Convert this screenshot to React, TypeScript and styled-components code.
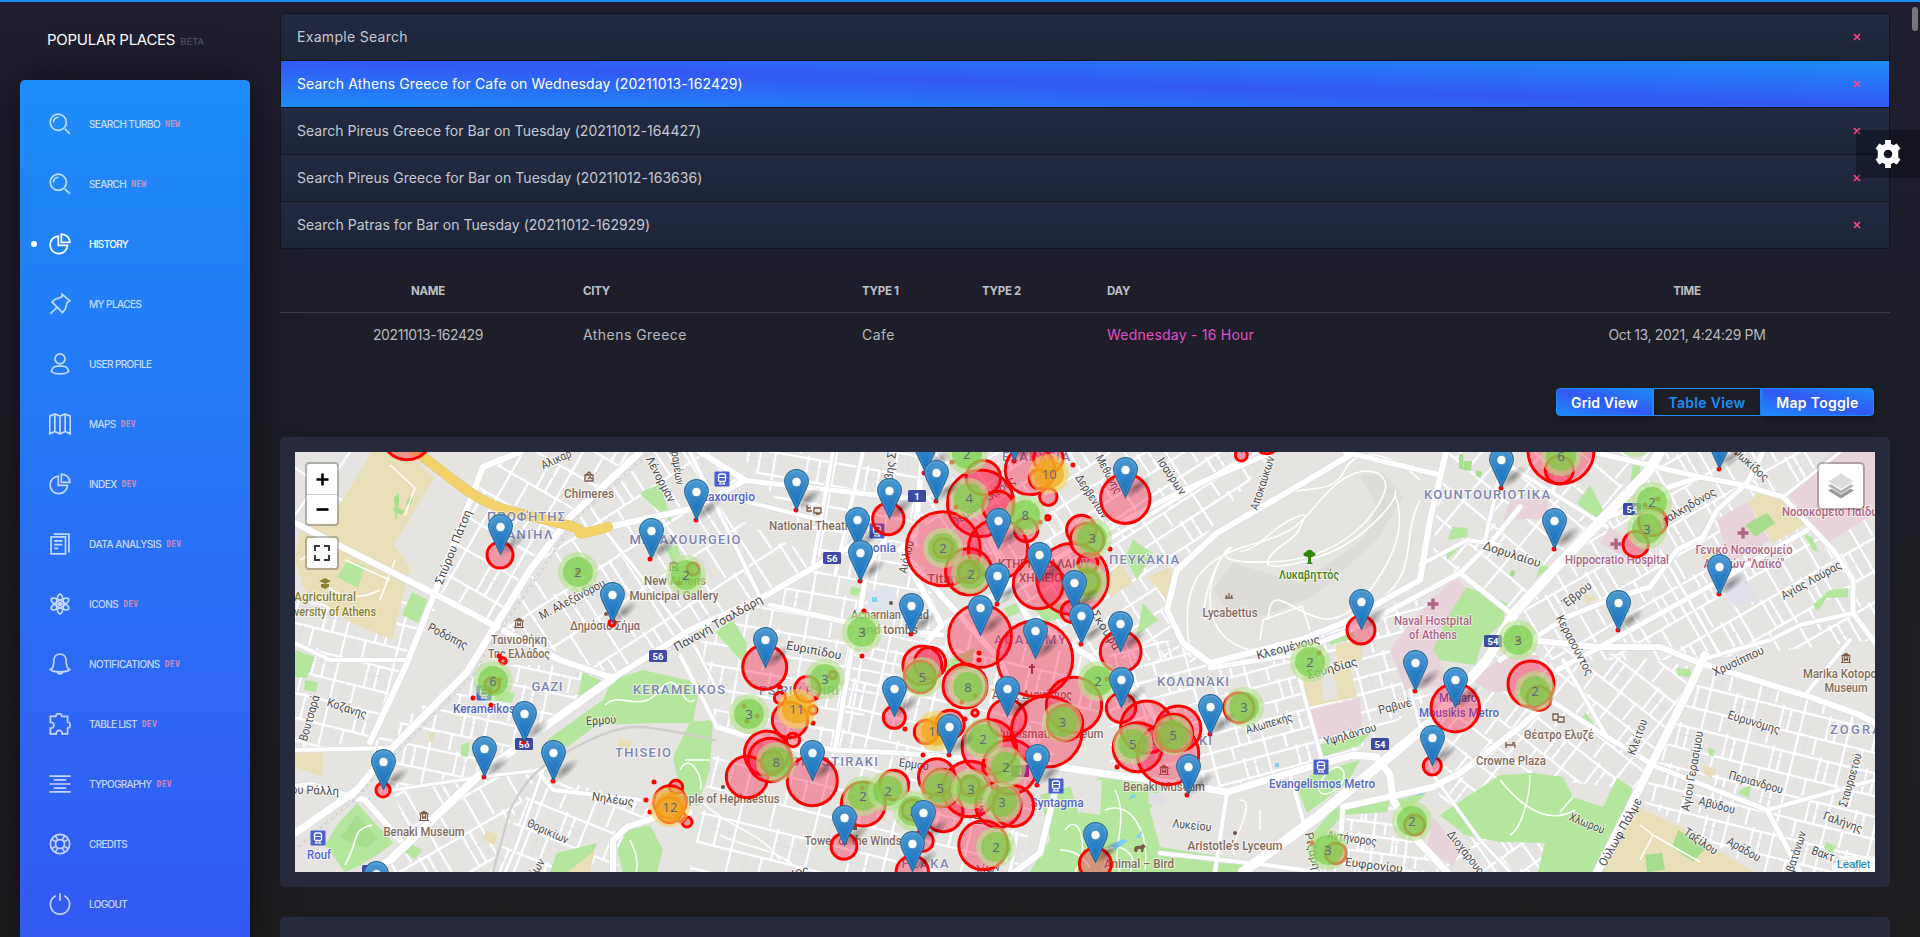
import React from 'react';
import styled, { createGlobalStyle, css } from 'styled-components';

const GlobalStyle = createGlobalStyle`
  html, body { margin: 0; height: 100%; overflow: hidden; }
  body {
    background: #1e1e26;
    font-family: Inter, 'Open Sans', sans-serif;
    color: #c3c4c8;
  }
  * { box-sizing: border-box; }
`;

const Page = styled.div`
  position: relative;
  display: flex;
  width: 100%;
  height: 937px;
  overflow: hidden;
  border-top: 2px solid #1d8cf8;
  background: linear-gradient(#1e1e2f, #1e1e26 50%, #1f1f22);
`;

const Sidebar = styled.aside`
  flex: 0 0 250px;
  padding-left: 20px;
  display: flex;
  flex-direction: column;
`;

const Brand = styled.div`
  flex: none;
  height: 78px;
  padding: 27px 0 0 27px;
  font-size: 15px;
  line-height: 22px;
  letter-spacing: -0.27px;
  color: #fff;
  white-space: nowrap;
`;

const BrandTag = styled.span`
  margin-left: 5px;
  font-size: 9.5px;
  letter-spacing: 0;
  color: #55565f;
`;

const NavPanel = styled.nav`
  width: 230px;
  height: 875px;
  flex: none;
  padding-top: 14px;
  border-radius: 5px;
  background: linear-gradient(#1d8cf8, #3358f4);
  box-shadow: 0 0 45px rgba(0, 0, 0, 0.6);
`;

const NavItem = styled.a<{ $active?: boolean }>`
  display: flex;
  align-items: center;
  height: 60px;
  padding-left: 11px;
  color: #fff;
  font-size: 10px;
  opacity: ${p => (p.$active ? 1 : 0.72)};
  &::before {
    content: '';
    width: 6px;
    height: 6px;
    margin-right: 12px;
    border-radius: 50%;
    background: ${p => (p.$active ? '#fff' : 'transparent')};
  }
`;

const NavIcon = styled.svg`
  width: 22px;
  height: 22px;
  margin-right: 18px;
  fill: none;
  stroke: currentColor;
  stroke-width: 5;
`;

const NavText = styled.span<{ $ls: number }>`
  letter-spacing: ${p => p.$ls}px;
  font-weight: 500;
  white-space: nowrap;
`;

const NavTag = styled.span`
  margin: 1px 0 0 5px;
  font-size: 8px;
  font-weight: 700;
  font-family: 'DejaVu Sans Mono', monospace;
  letter-spacing: 0.2px;
  color: #ff98a6;
`;

const Main = styled.main`
  flex: 1;
  padding: 11px 30px 0;
`;

const History = styled.div`
  border: 1px solid #12151f;
  border-radius: 4px 4px 0 0;
  overflow: hidden;
`;

const HistoryRow = styled.div<{ $active?: boolean }>`
  display: flex;
  align-items: center;
  justify-content: space-between;
  height: 47px;
  padding: 0 28px 1px 16px;
  border-bottom: 1px solid #12151f;
  font-size: 14px;
  color: #c6c9cf;
  background: linear-gradient(#222a42, #1d253a);
  &:last-child { height: 46px; border-bottom: 0; }
  ${p =>
    p.$active &&
    css`
      color: #fff;
      background: linear-gradient(to bottom left, #1d8cf8, #3358f4, #1d8cf8);
    `}
`;

const HistoryText = styled.span<{ $ls: number }>`
  letter-spacing: ${p => p.$ls}px;
`;

const Remove = styled.svg`
  width: 8px;
  height: 8px;
  stroke: #fd4a82;
  stroke-width: 1.5;
`;

const Info = styled.div`
  display: grid;
  grid-template-columns: 296px 279px 120px 125px 384px 406px;
  margin-top: 20px;
`;

const Head = styled.div<{ $center?: boolean }>`
  height: 44px;
  padding: 0 7px;
  line-height: 45px;
  font-size: 11.5px;
  font-weight: 700;
  letter-spacing: -0.25px;
  color: #bfc0c3;
  border-bottom: 1px solid #393a44;
  text-align: ${p => (p.$center ? 'center' : 'left')};
`;

const Cell = styled.div<{ $center?: boolean; $hot?: boolean }>`
  height: 44px;
  padding: 0 7px;
  line-height: 44px;
  font-size: 14px;
  letter-spacing: ${p => (p.$center ? '-0.38px' : p.$hot ? '0.23px' : '0.45px')};
  color: ${p => (p.$hot ? '#e14eca' : '#b8b9bc')};
  text-align: ${p => (p.$center ? 'center' : 'left')};
`;

const Toolbar = styled.div`
  display: flex;
  justify-content: flex-end;
  margin: 31px 16px 21px 0;
`;

const ToolButton = styled.button<{ $w: number; $plain?: boolean }>`
  width: ${p => p.$w}px;
  height: 28px;
  padding: 0;
  border: 1px solid #1d8cf8;
  color: #fff;
  font: 600 14px Inter, sans-serif;
  letter-spacing: ${p => (p.$w > 100 ? 0.3 : 0.12)}px;
  background: linear-gradient(to bottom left, #1d8cf8, #3358f4, #1d8cf8);
  box-shadow: 2px 2px 6px rgba(0, 0, 0, 0.4);
  &:first-child { border-radius: 4px 0 0 4px; }
  &:last-child { border-radius: 0 4px 4px 0; }
  ${p =>
    p.$plain &&
    css`
      color: #1d8cf8;
      background: transparent;
      box-shadow: none;
    `}
`;

const Card = styled.section`
  padding: 15px;
  border-radius: 5px;
  background: #27293d;
  box-shadow: 0 1px 20px rgba(0, 0, 0, 0.1);
  margin-bottom: 30px;
  min-height: 60px;
`;

const MapBox = styled.div`
  position: relative;
  height: 420px;
  overflow: hidden;
  background: #e5e4e0;
`;

const Layer = styled.svg`
  position: absolute;
  inset: 0;
  width: 1580px;
  height: 420px;
`;

const Bar = styled.div<{ $top: number }>`
  position: absolute;
  left: 10px;
  top: ${p => p.$top}px;
  width: 34px;
  border: 2px solid rgba(0, 0, 0, 0.24);
  border-radius: 4px;
  background: #fff;
  background-clip: padding-box;
`;

const BarButton = styled.div`
  display: flex;
  align-items: center;
  justify-content: center;
  height: 30px;
  & + & { border-top: 1px solid #ccc; }
  svg { display: block; }
`;

const LayersButton = styled.div`
  position: absolute;
  right: 10px;
  top: 10px;
  width: 48px;
  height: 48px;
  display: flex;
  align-items: center;
  justify-content: center;
  border: 2px solid rgba(0, 0, 0, 0.24);
  border-radius: 5px;
  background: #fff;
  background-clip: padding-box;
`;

const Attribution = styled.div`
  position: absolute;
  right: 0;
  bottom: 0;
  padding: 0 5px;
  font: 11px/16px 'Liberation Sans', sans-serif;
  color: #0078a8;
  background: rgba(255, 255, 255, 0.7);
`;

const PinIcon = styled.svg`
  position: absolute;
  width: 52px;
  height: 44px;
  overflow: visible;
`;

const ClusterMark = styled.div<{ $warm: boolean }>`
  position: absolute;
  width: 40px;
  height: 40px;
  padding: 5px;
  border-radius: 50%;
  background: ${p => (p.$warm ? 'rgba(241,211,87,.6)' : 'rgba(181,226,140,.6)')};
  span {
    display: block;
    height: 30px;
    border-radius: 50%;
    text-align: center;
    font: 13px/30px 'Noto Sans', sans-serif;
    color: #5f6b7c;
    background: ${p => (p.$warm ? 'rgba(240,168,12,.65)' : 'rgba(110,204,57,.6)')};
  }
`;

const SettingsTab = styled.div`
  position: absolute;
  right: 0;
  top: 128px;
  width: 64px;
  height: 48px;
  display: flex;
  align-items: center;
  justify-content: center;
  border-radius: 4px 0 0 4px;
  background: rgba(0, 0, 0, 0.3);
`;

const Thumb = styled.div`
  position: absolute;
  right: 2px;
  top: 5px;
  width: 6px;
  height: 24px;
  border-radius: 3px;
  background: #77777b;
`;

/* ---------- navigation ---------- */

const icons: Record<string, React.ReactNode> = {
  search: (
    <>
      <circle cx="27" cy="27" r="23.5" />
      <path d="M13 27a14 14 0 0 1 14-14M46 46l15 15" />
    </>
  ),
  pie: (
    <>
      <path d="M27 9a25.5 25.5 0 1 0 27 27H27Z" />
      <path d="M36 3v24h25A25 25 0 0 0 36 3Z" />
    </>
  ),
  pin: <path d="M38 3l23 20-8 4-6 21-8 9L9 26l9-8 19-6ZM24 41L4 61" />,
  user: (
    <>
      <circle cx="32" cy="17" r="14.5" />
      <path d="M7 55c0-12 10-17 17-17h16c7 0 17 5 17 17 0 0-9 6-25 6S7 55 7 55Z" />
    </>
  ),
  map: <path d="M2 9l15-6 15 6 15-6 15 6v52l-15-7-15 7-15-7-15 7ZM17 3v50M32 9v50M47 3v50" />,
  paper: <path d="M6 11h42v50H6ZM14 3h44v54M15 23h24M15 34h24M15 45h12" />,
  atom: (
    <>
      <ellipse cx="32" cy="32" rx="10" ry="29" />
      <ellipse cx="32" cy="32" rx="10" ry="29" transform="rotate(60 32 32)" />
      <ellipse cx="32" cy="32" rx="10" ry="29" transform="rotate(120 32 32)" />
      <circle cx="32" cy="32" r="4" fill="currentColor" />
    </>
  ),
  bell: (
    <path d="M32 3C20 3 14 12 14 22c0 18-3 22-10 26 6 5 16 7 28 7s22-2 28-7c-7-4-10-8-10-26C50 12 44 3 32 3ZM25 55c1 8 13 8 14 0" />
  ),
  puzzle: (
    <path d="M4 10h16c0-12 18-10 17 0h17v17c10-1 10 17 0 17v17H38c1-14-18-14-17 0H4V44c14 1 14-18 0-17Z" />
  ),
  lines: <path d="M1 9h62M14 20h36M1 32h62M14 44h36M1 55h62" />,
  ring: (
    <>
      <circle cx="32" cy="32" r="28" />
      <circle cx="32" cy="32" r="13" />
      <path d="M9 19l12 7M19 9l7 12M55 19l-12 7M45 9l-7 12M9 45l12-7M19 55l7-12M55 45l-12-7M45 55l-7-12" />
    </>
  ),
  power: <path d="M32 1v22M20 8a28 28 0 1 0 24 0" />,
};

const nav: [string, string, string, number][] = [
  ['search', 'SEARCH TURBO', 'NEW', -0.6],
  ['search', 'SEARCH', 'NEW', -0.62],
  ['pie', 'HISTORY', '', -0.65],
  ['pin', 'MY PLACES', '', -0.55],
  ['user', 'USER PROFILE', '', -0.62],
  ['map', 'MAPS', 'DEV', -0.6],
  ['pie', 'INDEX', 'DEV', -0.6],
  ['paper', 'DATA ANALYSIS', 'DEV', -0.45],
  ['atom', 'ICONS', 'DEV', -0.5],
  ['bell', 'NOTIFICATIONS', 'DEV', -0.48],
  ['puzzle', 'TABLE LIST', 'DEV', -0.72],
  ['lines', 'TYPOGRAPHY', 'DEV', -0.7],
  ['ring', 'CREDITS', '', -0.66],
  ['power', 'LOGOUT', '', -0.65],
];

const searches: [string, number][] = [
  ['Example Search', 0.3],
  ['Search Athens Greece for Cafe on Wednesday (20211013-162429)', 0.13],
  ['Search Pireus Greece for Bar on Tuesday (20211012-164427)', 0.03],
  ['Search Pireus Greece for Bar on Tuesday (20211012-163636)', 0.05],
  ['Search Patras for Bar on Tuesday (20211012-162929)', 0.04],
];

/* ---------- map data, in a 1580x420 frame whose origin is 295,452 ---------- */

type District = [string, number, number, number];
const districts: District[] = [
  ['295,452 372,452 320,537 295,523', 35, 60, 70],
  ['483,467 520,452 638,452 570,517 494,625 436,593', 30, 26, 30],
  ['640,452 740,452 740,520 823,562 690,630 613,675 497,627 570,517', -33, 27, 40],
  ['740,452 923,452 915,535 940,623 835,750 717,730 700,640 823,562', 10, 30, 22],
  ['295,600 440,600 410,660 370,740 295,750', 14, 27, 23],
  ['370,745 477,665 553,665 613,680 540,730 480,777 393,792', 12, 26, 20],
  ['393,790 480,777 540,770 500,840 490,872 385,872 410,840', -30, 24, 34],
  ['537,775 640,800 655,817 613,872 490,872', 22, 25, 27],
  ['923,452 1273,452 1177,570 1167,610 1210,663 1090,657 1010,600 920,520', -33, 28, 20],
  ['940,623 1090,657 1110,700 1043,765 835,750 860,610', 13, 28, 26],
  ['717,735 1043,765 1020,872 690,872', 14, 38, 28],
  ['1110,640 1300,642 1440,585 1440,690 1350,755 1227,792 1110,773', -15, 27, 17],
  ['1343,815 1393,803 1440,872 1320,872', 7, 17, 15],
  ['1440,452 1650,452 1560,563 1515,612 1433,560', 40, 36, 28],
  ['1660,452 1875,452 1875,640 1700,660 1515,660 1515,615', -30, 23, 28],
  ['1433,690 1520,640 1700,667 1640,790 1500,775 1440,815', 38, 25, 24],
  ['1700,665 1875,720 1875,872 1760,872 1640,800', 14, 24, 21],
  ['1440,835 1545,843 1538,872 1447,872', -35, 19, 24],
];

const tan = '#e8dfb8';
const green = '#b5e69e';
const leaf = '#a6de8e';
const pink = '#e8d3da';

const areas: [string, string][] = [
  ['#e5e4e0', '1165,600 1180,565 1220,533 1350,455 1443,473 1433,520 1420,578 1343,622 1210,662 1175,640'],
  ['#dddcd8', '1360,475 1383,473 1403,497 1377,540 1313,597 1260,617 1227,610 1213,590 1233,563 1300,583 1363,540 1377,507'],
  [tan, '372,452 408,452 434,478 394,545 410,567 392,640 350,622 305,590 295,560 300,530 330,520'],
  [tan, '295,752 323,753 322,777 295,767'],
  [leaf, '394,498 399,493 399,501 396,521'],
  [leaf, '395,506 405,511 401,515 393,510'],
  [leaf, '409,497 413,500 410,506 406,503'],
  [green, '412,592 428,600 418,623 402,615'],
  [green, '347,562 365,565 358,588 337,577'],
  [green, '295,650 315,657 307,678 295,677'],
  [green, '305,680 318,682 316,692 304,690'],
  [green, '357,803 393,843 380,853 357,867 345,872 325,845 337,825'],
  [leaf, '357,815 378,838 366,848 340,838'],
  [green, '410,843 422,850 415,859 404,852'],
  [green, '643,491 660,484 672,523 640,494'],
  [green, '665,549 677,545 681,556 672,561'],
  [green, '498,690 515,693 512,703 494,700'],
  [green, '461,745 469,742 468,757 461,756'],
  [tan, '429,732 434,732 434,742 429,742'],
  [tan, '486,830 498,835 494,845 483,840'],
  [green, '643,670 700,683 693,723 657,723 597,725 567,747 547,740 603,700 612,680'],
  [green, '583,672 605,683 596,697 578,695'],
  [green, '673,757 690,722 713,720 710,770 697,807 680,790'],
  [tan, '619,738 632,741 628,752 618,748'],
  [green, '627,830 650,825 663,850 657,872 623,872 617,850'],
  [green, '557,853 597,843 590,860 580,872 550,872'],
  [tan, '595,850 590,872 568,872'],
  [green, '733,620 747,643 745,665 715,632'],
  [green, '948,660 975,648 970,668 945,672'],
  [green, '851,586 861,589 858,596 850,594'],
  [green, '1004,608 1016,603 1021,612 1008,617'],
  [green, '1035,610 1060,603 1066,617 1045,622'],
  [green, '1133,540 1153,553 1137,580 1125,557'],
  [tan, '1120,563 1133,583 1110,597 1104,580'],
  [tan, '1170,567 1173,587 1167,600 1148,577'],
  [green, '1143,603 1158,620 1137,635'],
  [green, '1040,795 1100,778 1163,783 1150,810 1160,847 1245,860 1240,872 1030,872 1050,840'],
  ['#e5e4e0', '1068,778 1102,780 1100,815 1078,812'],
  ['#e0dfe3', '1148,792 1166,795 1164,806 1149,804'],
  [pink, '1310,710 1360,698 1362,727 1317,740'],
  [tan, '1303,677 1350,667 1357,697 1307,707'],
  ['#e5e4e0', '1320,673 1333,670 1338,698 1324,701'],
  [green, '1318,745 1370,733 1360,745 1322,757'],
  [green, '1297,787 1313,773 1360,760 1347,783 1307,813'],
  [green, '1307,840 1333,810 1347,803 1390,800 1387,812 1343,815 1310,852'],
  [green, '1398,800 1427,792 1420,800 1404,812'],
  [tan, '1335,645 1362,640 1362,660 1338,664'],
  [green, '1326,638 1352,630 1355,638 1330,645'],
  [pink, '1455,577 1467,590 1440,630 1440,660 1450,685 1405,690 1390,650 1412,620'],
  [green, '1467,587 1507,603 1503,623 1483,640 1475,665 1440,660 1433,650 1447,617'],
  [pink, '1473,680 1505,655 1540,655 1540,690 1490,692'],
  [green, '1452,527 1468,528 1467,537 1448,540'],
  [green, '1447,547 1465,542 1447,560'],
  [leaf, '1459,454 1463,454 1464,470 1459,468'],
  [leaf, '1464,461 1472,461 1471,471 1464,470'],
  [leaf, '1476,470 1482,472 1480,478 1476,476'],
  [pink, '1510,500 1550,495 1545,518 1503,520'],
  [green, '1590,485 1607,517 1600,523 1577,503'],
  [green, '1633,463 1641,463 1637,490 1627,507'],
  [pink, '1610,527 1647,553 1633,563 1600,543'],
  [green, '1540,565 1550,567 1536,578'],
  [leaf, '1512,570 1516,572 1513,577 1509,575'],
  [tan, '1583,593 1596,598 1587,605'],
  [pink, '1833,452 1875,452 1875,513 1827,543 1787,493'],
  [pink, '1717,520 1747,502 1770,540 1730,563'],
  [tan, '1760,490 1787,497 1805,525 1773,543 1748,503'],
  [leaf, '1745,525 1767,513 1775,523 1755,537'],
  [tan, '1703,550 1718,553 1712,562 1703,560'],
  [green, '1803,533 1812,537 1819,552 1813,550'],
  [green, '1830,590 1848,588 1848,597 1827,598 1818,611 1813,605'],
  ['#dfe0ea', '1722,590 1742,572 1758,600 1735,607'],
  [green, '1440,815 1500,775 1533,773 1563,777 1573,797 1603,807 1617,778 1632,788 1630,803 1597,872 1538,872 1545,843 1500,842 1465,835'],
  [pink, '1433,817 1460,850 1453,867 1427,847'],
  [tan, '1638,807 1680,827 1753,872 1600,872'],
  [leaf, '1645,855 1662,853 1665,870 1647,872'],
  [leaf, '1678,830 1707,847 1693,862 1672,847'],
  [green, '1586,713 1600,732 1581,718'],
  [green, '1677,668 1690,669 1692,677 1678,676'],
  [tan, '1704,765 1717,770 1711,778 1702,773'],
  [green, '1740,790 1751,785 1749,798 1738,793'],
  [green, '1826,842 1836,846 1832,854 1824,848'],
  [green, '1708,748 1715,750 1713,757 1709,755'],
  ['#e0e4ec', '868,590 895,588 900,612 868,610'],
];

const roads: [number, string][] = [
  [6, '295,523 338,545 433,593 497,627 560,660 613,678'],
  [7, '640,452 570,517 530,570 493,630 467,672 390,750 357,790 295,833'],
  [6, '520,452 483,467 433,597 405,668 370,742'],
  [6, '608,527 695,508 745,480 700,452'],
  [6, '613,678 690,630 763,597 823,562 870,535'],
  [8, '613,678 540,730 477,777 390,860 373,872'],
  [4, '295,750 393,748'],
  [6, '295,787 312,785 345,795 365,800 400,840'],
  [4, '295,643 330,660 407,660'],
  [3, '393,790 480,777 540,770 560,760'],
  [4, '537,770 553,790 640,800'],
  [3, '543,770 515,850 505,872'],
  [6, '613,872 613,840 627,827 657,817 690,812'],
  [3, '607,533 660,600 697,650 717,690'],
  [4, '680,655 717,727'],
  [4, '690,452 760,597'],
  [4, '740,500 860,530'],
  [5, '740,480 923,500'],
  [4, '833,452 813,563'],
  [4, '863,452 835,575'],
  [5, '885,540 868,565 860,610 850,660 835,750'],
  [6, '923,452 915,535 900,550 942,625 915,655'],
  [5, '770,605 860,625 942,635'],
  [5, '717,727 743,735 835,750 900,753 1043,765'],
  [6, '900,550 1000,660 1043,765'],
  [6, '990,540 1027,617 1090,657 1143,697 1165,735'],
  [5, '942,625 1100,533 1183,490 1273,452'],
  [4, '1000,600 1100,545 1240,460'],
  [7, '1040,764 1100,773 1167,782 1227,792 1310,767 1353,755 1377,757 1390,775 1393,800 1417,840 1447,872'],
  [10, '1243,872 1317,817 1377,767 1433,720 1487,660 1515,612 1560,563 1647,473 1660,452'],
  [6, '1343,807 1433,787 1460,773 1520,727 1550,700'],
  [6, '1350,455 1320,473 1217,533 1177,570 1167,610 1183,643 1210,663 1300,640 1343,623 1420,580 1430,520 1446,452'],
  [5, '1345,452 1440,475'],
  [5, '1210,668 1290,655 1367,623 1460,573 1493,540 1520,507'],
  [4, '1420,565 1467,540 1500,545'],
  [5, '1460,573 1515,617'],
  [4, '1500,460 1553,493 1607,527'],
  [4, '1553,493 1560,452'],
  [4, '1485,540 1505,452'],
  [5, '1597,453 1700,477 1743,485 1783,497 1833,550 1853,580 1853,613 1875,643'],
  [5, '1763,452 1747,483 1717,510 1703,537 1677,550 1650,587 1617,597 1567,617 1500,660'],
  [5, '1600,520 1640,505 1660,490 1700,477'],
  [5, '1807,530 1733,573 1600,647 1557,670'],
  [3, '1783,497 1840,452'],
  [3, '1660,550 1720,655'],
  [6, '1530,640 1597,647 1660,647 1700,663 1810,697 1860,715 1875,723'],
  [4, '1700,660 1770,640 1800,625 1853,613'],
  [4, '1805,695 1850,640'],
  [8, '1705,655 1687,693 1647,773 1597,872'],
  [5, '1550,700 1607,737 1657,767 1767,810 1800,872'],
  [4, '1563,660 1607,737'],
  [4, '1160,853 1267,865 1317,872'],
  [4, '1227,792 1215,872'],
  [4, '1290,775 1305,827'],
  [4, '1297,670 1322,760'],
  [5, '1343,807 1340,847'],
  [6, '1058,780 1053,800 1040,853 1015,872'],
  [4, '1017,833 1010,872'],
  [3, '1410,690 1433,775 1480,840 1510,872'],
  [4, '1767,810 1875,780'],
];

const trails = [
  'M1190 650C1180 590 1195 560 1250 545S1300 520 1330 490 1390 470 1385 490 1345 560 1270 562 1240 545 1230 548 1200 600 1205 620',
  'M1240 552C1260 548 1270 530 1290 520S1305 515 1300 528 1275 545 1268 560 1320 560 1345 545 1400 500 1395 490',
  'M1395 495C1405 520 1400 550 1370 590S1320 620 1300 610 1270 590 1268 620',
  'M1220 560C1200 600 1210 640 1250 650M1420 500C1400 540 1420 570 1380 600M1260 640L1263 620 1302 606 1310 630',
  'M1280 500C1300 480 1330 500 1345 470S1400 460 1420 480',
  'M1115 790C1130 820 1110 850 1120 872M1105 810C1130 800 1150 830 1145 870M1065 830C1080 810 1090 850 1075 872M1105 850C1125 840 1140 860 1130 872M1060 850Q1080 850 1090 868',
  'M1530 775C1530 800 1520 830 1510 835M1500 780Q1540 830 1575 810M1573 797L1560 812M1640 825L1653 835 1640 860M1653 835L1700 862',
  'M390 465L415 488 405 515M345 560L390 580M320 580C340 600 360 600 380 590M380 600L395 560M300 560L330 545',
  'M605 705C620 690 640 715 660 690S680 710 695 700M680 770C690 750 705 780 700 790M685 760H710',
  'M700 800C730 830 760 830 780 860M720 835C750 850 770 845 800 870M630 840Q640 860 636 872M345 865C360 840 350 830 372 825',
  'M1240 800C1260 800 1225 850 1235 855M1260 810V830M1330 770C1345 760 1350 780 1335 790S1310 790 1330 770',
];

type Label = [string, number, number, number, number, string];
const street = '#4c4c4c';
const poi = '#846c5d';
const zone = '#7d85b0';
const metro = '#5665c9';
const health = '#ad6585';
const labels: Label[] = [
  ['Chimeres', 589, 494, 50, 0, poi],
  ['ΠΡΟΦΉΤΗΣ', 526, 517, 78, 0, zone],
  ['ΔΑΝΙΉΛ', 524, 535, 57, 0, zone],
  ['METAXOURGEIO', 685, 540, 111, 0, zone],
  ['Σπύρου Πάτση', 453, 547, 79, -68, street],
  ['Ροδόπης', 448, 636, 43, 27, street],
  ['Μ. Αλεξάνδρου', 572, 599, 73, -28, street],
  ['Αλικαρ', 556, 459, 32, -24, street],
  ['Λένορμαν', 661, 479, 50, 62, street],
  ['ραμέων', 678, 468, 34, 82, street],
  ['Παναγή Τσαλδάρη', 718, 623, 100, -30, street],
  ['Ευριπίδου', 814, 650, 56, 11, street],
  ['Δημόσιο Σήμα', 605, 626, 70, 0, poi],
  ['Ταινιοθήκη', 519, 640, 56, 0, poi],
  ['Της Ελλάδος', 519, 654, 62, 0, poi],
  ['Agricultural', 325, 597, 62, 0, '#8a8033'],
  ['University of Athens', 327, 612, 98, 0, '#8a8033'],
  ['New Athens', 675, 581, 62, 0, poi],
  ['Municipal Gallery', 674, 596, 89, 0, poi],
  ['National Theatre', 812, 526, 86, 0, poi],
  ['Metaxourgio', 721, 497, 68, 0, metro],
  ['Omonia', 875, 548, 42, 0, metro],
  ['Acharnian Road', 890, 615, 78, 0, poi],
  ['and tombs', 889, 630, 58, 0, poi],
  ['Titania', 948, 579, 42, 0, poi],
  ['Θεμιστοκλέους', 983, 501, 76, -36, street],
  ['ΕΞΆΡΧΕΙΑ', 1036, 457, 68, 0, zone],
  ['ΚΤΗΡΙΟ ΠΑΛΑΙΟΥ', 1044, 564, 92, 0, poi],
  ['ΧΗΜΕΙΟΥ', 1044, 578, 50, 0, poi],
  ['ACADEMY', 1030, 640, 72, 0, zone],
  ['Αιόλου', 906, 557, 33, -77, street],
  ['βης Σ', 890, 466, 28, -82, street],
  ['Μεθώνης', 1109, 474, 42, 62, street],
  ['Δερβενίων', 1092, 496, 50, 57, street],
  ['Σκουφά', 1106, 630, 44, 58, street],
  ['Ισαύρων', 1172, 476, 42, 56, street],
  ['Αποκαύκων', 1262, 483, 56, -72, street],
  ['ΠΕΥΚΆΚΙΑ', 1144, 560, 70, 0, zone],
  ['Λυκαβηττός', 1309, 575, 60, 0, '#3f8420'],
  ['Lycabettus', 1230, 613, 55, 0, poi],
  ['Κλεομένους', 1288, 647, 65, -15, street],
  ['Σουηδίας', 1332, 668, 52, -16, street],
  ['Naval Hostpital', 1433, 621, 78, 0, health],
  ['of Athens', 1433, 635, 48, 0, health],
  ['KOUNTOURIOTIKA', 1487, 495, 126, 0, zone],
  ['Δορυλαίου', 1512, 554, 60, 18, street],
  ['Hippocratio Hospital', 1617, 560, 104, 0, health],
  ['Γενικό Νοσοκομείο', 1744, 550, 97, 0, health],
  ['Αθηνών "Λαϊκό"', 1744, 564, 81, 0, health],
  ['Νοσοκομείο Παίδων', 1834, 512, 104, 0, health],
  ['Χαλκηδόνος', 1688, 506, 62, -30, street],
  ['Φωκίδος', 1751, 464, 44, 42, street],
  ['Αγίας Λαύρας', 1811, 580, 67, -29, street],
  ['Έβρου', 1577, 594, 33, -38, street],
  ['Κερασούντος', 1575, 645, 66, 62, street],
  ['Χρυσίππου', 1738, 661, 55, -25, street],
  ['Marika Kotopouli', 1846, 674, 86, 0, poi],
  ['Museum', 1846, 688, 43, 0, poi],
  ['ZOGRAFOU', 1871, 730, 82, 0, zone],
  ['Θέατρο Ελυζέ', 1559, 735, 70, 0, poi],
  ['Crowne Plaza', 1511, 761, 70, 0, poi],
  ['Ευρυνόμης', 1754, 722, 54, 17, street],
  ['Κλείτου', 1637, 737, 37, -70, street],
  ['Αγίου Γερασίμου', 1692, 771, 81, -80, street],
  ['Περιάνδρου', 1756, 782, 56, 16, street],
  ['Αβύδου', 1717, 805, 37, 15, street],
  ['Σταυραετού', 1850, 780, 55, -74, street],
  ['Γαλήνης', 1843, 822, 41, 20, street],
  ['Χλωρού', 1587, 823, 37, 22, street],
  ['Ούλωφ Πάλμε', 1620, 832, 76, -61, street],
  ['Ταξίλου', 1701, 841, 38, 34, street],
  ['Αράδου', 1744, 849, 37, 30, street],
  ['Εκβατάνων', 1794, 857, 54, -72, street],
  ['Βακτριανής', 1838, 859, 55, 20, street],
  ['Ραβινέ', 1395, 706, 34, -14, street],
  ['Αλωπεκής', 1269, 723, 48, -16, street],
  ['Υψηλάντου', 1350, 734, 54, -16, street],
  ['Megaro', 1458, 698, 38, 0, metro],
  ['Mousikis Metro', 1459, 713, 80, 0, metro],
  ['Evangelismos Metro', 1322, 784, 106, 0, metro],
  ['ΚΟΛΩΝΆΚΙ', 1193, 682, 72, 0, zone],
  ['KOLONAKI', 1177, 741, 70, 0, zone],
  ['Benaki Museum', 1164, 787, 82, 0, poi],
  ['Λυκείου', 1192, 825, 39, 6, street],
  ['Aristotle’s Lyceum', 1235, 846, 95, 0, poi],
  ['Animal – Bird', 1139, 864, 70, 0, poi],
  ['Διοχάρους', 1466, 852, 52, 52, street],
  ['Αντήνορος', 1352, 838, 50, 8, street],
  ['Ευφρονίου', 1374, 865, 58, 7, street],
  ['Ριζάρη', 1313, 851, 38, 77, street],
  ['PSIRI / PSIRI', 799, 691, 80, 0, zone],
  ['KERAMEIKOS', 679, 690, 92, 0, zone],
  ['GAZI', 547, 687, 31, 0, zone],
  ['THISEIO', 643, 753, 56, 0, zone],
  ['MONASTIRAKI', 828, 762, 100, 0, zone],
  ['Ερμού', 601, 720, 30, -4, street],
  ['Ερμού', 914, 764, 30, 8, street],
  ['Temple of Hephaestus', 723, 799, 113, 0, poi],
  ['Tower of the Winds', 853, 841, 97, 0, poi],
  ['PLAKA', 925, 864, 47, 0, zone],
  ['Syntagma', 1057, 803, 53, 0, metro],
  ['Άγιος Διονύσιος', 1032, 695, 80, 0, poi],
  ['Numismatic Museum', 1049, 734, 109, 0, poi],
  ['Kerameikos', 484, 709, 62, 0, metro],
  ['Κοζάνης', 347, 708, 41, 18, street],
  ['Βουτσαρά', 309, 718, 47, -74, street],
  ['ου Ράλλη', 315, 790, 48, 2, street],
  ['Benaki Museum', 424, 832, 81, 0, poi],
  ['Rouf', 319, 855, 24, 0, metro],
  ['Νηλέως', 613, 799, 42, 8, street],
  ['Θορικίων', 548, 831, 44, 24, street],
  ['ίων', 537, 867, 18, -55, street],
  ['Νίκης', 979, 810, 30, -86, street],
  ['λίων', 988, 868, 24, -8, street],
  ['ιος', 800, 871, 18, -12, street],
];

const shields: [string, number, number, string][] = [
  ['56', 658, 656, '#3c4ba6'],
  ['56', 832, 558, '#3c4ba6'],
  ['1', 917, 496, '#3c4ba6'],
  ['56', 524, 744, '#3c4ba6'],
  ['54', 1493, 641, '#3c4ba6'],
  ['54', 1380, 744, '#3c4ba6'],
  ['54', 1632, 509, '#3c4ba6'],
  ['1', 1020, 771, '#7a3aa0'],
  ['56', 371, 871, '#3c4ba6'],
];

const stations = [[722, 479], [877, 531], [484, 693], [318, 838], [1056, 786], [1321, 767]];
const museums = [[519, 623], [674, 566], [424, 816], [1846, 658], [1164, 770]];
const crosses = [[1433, 604], [1616, 544], [1743, 533]];

/* centre x, centre y, outer radius */
const circles = [
  [407, 434, 27], [500, 555, 14.3], [503, 661, 4.5], [612, 623, 4.3], [693, 569, 7.3],
  [492, 685, 8.7], [383, 790, 8.3], [676, 787, 8], [670, 802, 17.5], [669.5, 810, 14], [687, 822, 6.3], [681, 817, 6],
  [888.3, 519, 17], [764.7, 667.3, 23.3], [983.3, 477.7, 18.5], [980.7, 503.3, 34.5], [943.3, 548.7, 38.3],
  [943, 548, 11], [968.7, 571.7, 24.5], [969, 572, 12], [998.3, 507, 17], [1030, 470, 26], [1048.3, 458, 16],
  [1039, 479, 11], [1048.3, 496.7, 10], [1047.7, 517.7, 3.5], [1026, 530, 13], [1081.3, 530, 16], [1087, 540, 18],
  [998, 549, 31], [1072.5, 579, 37], [1038.3, 583.7, 26.3], [1088, 563, 11], [1087, 582, 13], [1071.7, 611.7, 12],
  [980, 636, 32.7], [1035, 658.7, 39], [1125.3, 498.7, 26], [1120.7, 651.7, 21.7], [1241.3, 455, 7.3],
  [1267, 441, 14], [1361, 630, 15.3], [922.3, 665.3, 20.7], [930, 663, 17], [920, 677, 17], [965, 686, 23.3],
  [975, 713, 4.5], [894.3, 717.3, 12.3], [926, 732, 13], [950, 724.5, 15.5], [807.3, 689.3, 14], [780, 698, 7],
  [790, 720, 19], [812.7, 710, 5.5], [793, 740, 8], [766.7, 753.3, 23.5], [770, 760, 23], [747, 777, 22],
  [772, 762, 12], [812.3, 780.7, 26.3], [833, 675, 5], [863.3, 804, 23.3], [894, 785, 16], [844, 846.3, 14.2],
  [923, 841, 11.5], [912.3, 872, 17.5], [912.3, 810, 11.5], [936.7, 777, 19.5], [941.7, 788, 20], [943.3, 812, 21],
  [970, 789, 29], [970, 786, 11], [989.3, 747, 28.5], [1010, 767, 28.5], [1007, 718.3, 20.3], [1046.7, 731.7, 36.7],
  [1065, 723, 19], [1074, 705, 29], [998.3, 805, 24], [1013.3, 806, 21.7], [983.3, 845.3, 25.8], [1095.3, 864, 17.3],
  [1121, 707.7, 16], [1146.7, 727, 27.3], [1137.7, 747.3, 25.8], [1168, 754, 32], [1178.3, 728.5, 23.8],
  [1174, 733, 20], [1239, 707.7, 16.3], [1455.3, 707.7, 25.5], [1432.3, 766, 10.3], [1414.7, 825, 11.3],
  [1335.7, 853.3, 11.7], [1561, 450.7, 34.3], [1559.3, 470, 15.3], [1652.7, 521.7, 15.3], [1635.7, 544.3, 14],
  [1531, 684, 24.3], [1539, 698.3, 13.3],
];

const dots = [
  [499, 656], [650, 559], [696, 520], [679, 583], [578, 572], [499, 680], [473, 698], [491, 705], [524, 742],
  [484, 777], [553, 781], [654, 782], [646, 800], [650, 812], [796, 510], [936, 501], [924, 473], [860, 581],
  [864, 611], [911, 634], [862, 656], [1014, 461], [1073, 465], [1040, 522], [997, 604], [1081, 644], [979, 653],
  [979, 660], [956, 507], [1110, 549], [1319, 653], [1501, 488], [905, 729], [923, 755], [949, 755], [965, 719],
  [780, 687], [813, 723], [816, 698], [744, 706], [757, 716], [747, 721], [1037, 785], [1117, 767], [1210, 734],
  [1187, 795], [1415, 691], [1312, 843], [1554, 549], [1618, 630], [1719, 594], [1719, 469], [1645, 505],
  [1658, 499], [862, 788], [978, 792], [1518, 640], [1107, 679], [975, 696], [962, 702], [952, 462],
];

/* x and y of the white hole of each pin */
const pins = [
  [1014, 433], [1241, 425], [1719.3, 441], [925.3, 445], [1501.3, 460.3], [1125.3, 470.3], [936, 473], [796.3, 482],
  [889.3, 491.3], [696, 492], [857.3, 520.3], [1554.3, 520.7], [998.3, 521], [500.3, 527], [651.7, 531],
  [860.3, 553.3], [1039.3, 555.3], [1719.3, 567], [997.3, 576.3], [1074.7, 583.3], [612.3, 595], [1361.3, 602.3],
  [1618.3, 603.3], [911.3, 606.3], [980.7, 608.3], [1081.3, 616], [1120.3, 624.3], [1035.3, 631.3], [765.3, 640.3],
  [1415.3, 663.3], [1121.3, 680.3], [1455.3, 680.3], [894.3, 689.3], [1007.3, 689.3], [1210.3, 706.7], [524.3, 714],
  [949.3, 727.3], [1432.3, 738.3], [484.7, 749.3], [553.3, 753.3], [812.7, 753.3], [1037.3, 757.3], [383.3, 762.3],
  [1188.3, 767.3], [923.3, 813], [844.3, 818.3], [1095.3, 835], [912.3, 844], [376.7, 873.7],
];

const clusters: [number, number, string][] = [
  [577.7, 572, '2'], [686, 575.3, '2'], [493, 680.7, '6'], [670, 806.7, '12'], [966.7, 454.3, '2'],
  [969.3, 498.3, '4'], [1049.3, 473.7, '10'], [1025.3, 515.3, '8'], [1092.3, 538.3, '3'], [943, 548.3, '2'],
  [971, 573.7, '2'], [862, 631.7, '3'], [1086.7, 581.7, ''], [825, 678.7, '3'], [749.3, 713.7, '3'],
  [796.7, 708.7, '11'], [776.3, 761.7, '8'], [922.3, 676.7, '5'], [968, 687.3, '8'], [936, 730.7, '10'],
  [983, 738.7, '2'], [1006, 766.7, '2'], [863, 795.7, '2'], [888, 791.3, '2'], [913.3, 811, '2'],
  [940.3, 787.7, '5'], [971, 788.7, '3'], [1002, 801.7, '3'], [996, 846.7, '2'], [1062.3, 721.7, '3'],
  [1098, 680.7, '2'], [1310, 661.7, '2'], [1132.7, 743.7, '5'], [1173.3, 734.7, '5'], [1244, 706.7, '3'],
  [1328, 850, '3'], [1412, 821, '2'], [1561, 455.7, '6'], [1635, 437, ''], [1652, 501.7, '2'],
  [1647, 528.7, '3'], [1518, 640, '3'], [1535, 690.7, '2'],
];

function Pin({ x, y }: { x: number; y: number }) {
  return (
    <PinIcon viewBox="0 0 52 44" style={{ left: x - 295 - 12.5, top: y - 452 - 13 }}>
      <ellipse cx="24" cy="30" rx="17" ry="6.5" transform="rotate(-38 24 30)" fill="url(#pinShadow)" />
      <path
        d="M12.5 .6C5.8 .6 .6 5.9 .6 12.3c0 3 1 5.2 2.3 7.6L12.5 40.5 22.1 19.9c1.3-2.4 2.3-4.6 2.3-7.6C24.4 5.9 19.2 .6 12.5 .6Z"
        fill="url(#pinBlue)"
        stroke="#2e6c97"
        strokeWidth="1.1"
      />
      <path
        d="M12.5 1.9C6.6 1.9 1.9 6.5 1.9 12.3c0 2.7.9 4.7 2.2 7L12.5 37.3 20.9 19.3c1.3-2.3 2.2-4.3 2.2-7C23.1 6.5 18.4 1.9 12.5 1.9Z"
        fill="none"
        stroke="#fff"
        strokeOpacity=".14"
      />
      <circle cx="12.5" cy="13" r="4.5" fill="#fff" stroke="#2e6c97" strokeOpacity=".5" strokeWidth=".8" />
    </PinIcon>
  );
}

function BaseMap() {
  return (
    <Layer viewBox="295 452 1580 420">
      <defs>
        {districts.map(([, a, w, h], i) => (
          <pattern key={i} id={`d${i}`} width={w * 2} height={h * 2} patternUnits="userSpaceOnUse" patternTransform={`rotate(${a})`}>
            <g fill="none">
              {['#dadbe6', '#fff'].map((c, k) => (
                <path
                  key={c}
                  stroke={c}
                  strokeWidth={k ? 2.5 : 3.7}
                  d={`M0 3H${w * 2}M0 ${h + 4}H${w * 2}M3 0V${h * 2}M${w + 6} 0V${h + 4}M${w - 3} ${h + 4}V${h * 2}M${w * 1.6} 3V${h + 4}`}
                />
              ))}
              <path d={`M${w + 6} ${h * 0.55}H${w * 2}M${w * 0.5} ${h + 4}V${h * 2}`} stroke="#dcdde8" strokeWidth="1" />
            </g>
          </pattern>
        ))}
      </defs>
      {districts.map(([pts], i) => (
        <polygon key={i} points={pts} fill={`url(#d${i})`} />
      ))}
      {areas.map(([c, pts], i) => (
        <polygon key={i} points={pts} fill={c} />
      ))}
      <g fill="none" stroke="#fff" strokeWidth="1.5" strokeLinejoin="round">
        {trails.map(d => (
          <path key={d} d={d} />
        ))}
      </g>
      <g fill="#7fd0f2">
        <path d="M1110 845l13-6 5 2-12 8ZM1128 800l6-7 2 4ZM1135 838l8-8-3 8ZM1275 763h4v4h-4ZM1414 796l8-4 1 2ZM872 597h5v5h-5Z" />
      </g>
      <g fill="none" strokeLinecap="round" strokeLinejoin="round">
        {roads.map(([w, pts], i) => (
          <polyline key={i} points={pts} stroke="#dcdde6" strokeWidth={w + 1.4} />
        ))}
        {roads.map(([w, pts], i) => (
          <polyline key={i} points={pts} stroke="#fff" strokeWidth={w} />
        ))}
        <path d="M650 452L578 517 500 630 474 674 397 752 358 796 295 850" stroke="#d3d2cf" strokeWidth="2.6" />
        <path d="M650 452L578 517 500 630 474 674 397 752 358 796 295 850" stroke="#fff" strokeWidth="1" strokeDasharray="4 3" />
        <path d="M493 872L510 810Q525 780 543 767T590 740 640 727 715 740" stroke="#cfcecb" strokeWidth="2.4" />
        <path d="M410 447Q430 462 453 480T493 505 547 520 580 532 608 527" stroke="#e6c65f" strokeWidth="10" />
        <path d="M410 447Q430 462 453 480T493 505 547 520 580 532 608 527" stroke="#f3d269" strokeWidth="8.6" />
      </g>
      {museums.map(([x, y]) => (
        <g key={`${x}-${y}`} transform={`translate(${x} ${y})`} stroke="#7c5a48" fill="none">
          <path d="M-4.5 -2L0 -5 4.5 -2Z" fill="#7c5a48" />
          <path d="M-3.5 -1V4M3.5 -1V4M-5 4.5H5M-1.5 3V0L0 2 1.5 0V3" strokeWidth="1.2" />
        </g>
      ))}
      {crosses.map(([x, y]) => (
        <path key={x} d={`M${x - 5.5} ${y}h11M${x} ${y - 5.5}v11`} stroke={health} strokeWidth="3.4" />
      ))}
      <g stroke="#7c5a48" fill="none" strokeWidth="1.3">
        <path d="M585 475h8v6h-8ZM586 475l3-3 3 3M588 479l2-2 2 2" />
        <path d="M807 505v6h5M807 508h4M814 508h7v5h-7ZM816 514h4" />
        <path d="M1553 714h5v6h-5ZM1558 717h6v5h-6ZM1506 742v6M1506 745h9v3M1512 743h3" />
        <path d="M1226 595l1 3M1229 593v4M1232 595l-1 3M1225 598h8" />
        <path d="M1032 664v10M1029 667h6" stroke="#8e3f4f" strokeWidth="2" />
      </g>
      <path d="M319 581l6-3 6 3-6 3ZM321 584v3l4 2 4-2v-3Z" fill="#8a8033" />
      <path d="M1308 562v-5c-5 0-6-4-2-5 1-3 6-3 7 0 4 1 3 5-2 5v5l2 2h-6Z" fill="#2f8a0a" />
      <path d="M1134 850c0-4 3-5 6-4l4-2 2 3-2 1-1 4h-2v-3h-3l-1 3h-2Z" fill="#7c5a48" />
      <g fill="#6f5343">
        <circle cx="606" cy="614" r="2" />
        <circle cx="723" cy="787" r="2" />
        <circle cx="891" cy="603" r="2" />
        <circle cx="1235" cy="833" r="2" />
        <rect x="853" y="826" width="4" height="4" />
      </g>
      {shields.map(([n, x, y, c], i) => (
        <g key={i}>
          <rect x={x - 9} y={y - 6} width="18" height="12" rx="1.5" fill={c} />
          <text x={x} y={y + 3.5} fill="#fff" fontSize="9.5" fontWeight="700" fontFamily="Roboto, sans-serif" textAnchor="middle">
            {n}
          </text>
        </g>
      ))}
      {stations.map(([x, y]) => (
        <g key={x} transform={`translate(${x} ${y})`}>
          <rect x="-7.5" y="-7.5" width="15" height="15" rx="1" fill="#4a60cf" />
          <rect x="-3.5" y="-5" width="7" height="7.5" rx="1.5" fill="none" stroke="#fff" strokeWidth="1.3" />
          <path d="M-3 -1.5H3M-3 5.5L-1.5 3.5M3 5.5L1.5 3.5M-3 5H3" stroke="#fff" strokeWidth="1.1" />
        </g>
      ))}
      <g fontFamily="Roboto, 'Noto Sans', sans-serif" textAnchor="middle" paintOrder="stroke" stroke="#fff" strokeOpacity=".6" strokeWidth="2">
        {labels.map(([t, x, y, w, a, c], i) => (
          <text
            key={i}
            transform={`translate(${x} ${y}) rotate(${a})`}
            y="4.3"
            fill={c}
            fontSize={c === zone ? 13 : 12}
            fontWeight={c === street ? 400 : 500}
            textLength={w}
            lengthAdjust={c === zone ? 'spacing' : 'spacingAndGlyphs'}
          >
            {t}
          </text>
        ))}
      </g>
      <g fill="#ff0033" fillOpacity=".34" stroke="#ff0000" strokeWidth="3">
        {circles.map(([x, y, r], i) => (
          <circle key={i} cx={x} cy={y} r={r - 1.3} />
        ))}
      </g>
      <g fill="#ff0000">
        {dots.map(([x, y], i) => (
          <circle key={i} cx={x} cy={y} r="2.5" />
        ))}
      </g>
    </Layer>
  );
}

function PlacesMap() {
  return (
    <MapBox>
      <Layer width="0" height="0">
        <defs>
          <linearGradient id="pinBlue" x1="0" y1="0" x2="0" y2="1">
            <stop offset="0" stopColor="#4a9bd3" />
            <stop offset=".55" stopColor="#2b7fc6" />
            <stop offset="1" stopColor="#1570bd" />
          </linearGradient>
          <radialGradient id="pinShadow">
            <stop offset="0" stopColor="#000" stopOpacity=".38" />
            <stop offset="1" stopColor="#000" stopOpacity="0" />
          </radialGradient>
        </defs>
      </Layer>
      <BaseMap />
      {clusters.map(([x, y, n], i) => (
        <ClusterMark key={i} $warm={n.length > 1} style={{ left: x - 315, top: y - 472 }}>
          <span>{n}</span>
        </ClusterMark>
      ))}
      {pins.map(([x, y], i) => (
        <Pin key={i} x={x} y={y} />
      ))}
      <Bar $top={10}>
        <BarButton>
          <svg width="13" height="13"><path d="M6.5 .5v12M.5 6.5h12" stroke="#000" strokeWidth="2.6" /></svg>
        </BarButton>
        <BarButton>
          <svg width="13" height="13"><path d="M.5 6.5h12" stroke="#000" strokeWidth="2.6" /></svg>
        </BarButton>
      </Bar>
      <Bar $top={84}>
        <BarButton>
          <svg width="16" height="16" fill="none">
            <path d="M1 6V1h5M10 1h5v5M15 10v5h-5M6 15H1v-5" stroke="#3a3a3a" strokeWidth="2" />
          </svg>
        </BarButton>
      </Bar>
      <LayersButton>
        <svg width="26" height="26" viewBox="0 0 26 26">
          <path d="M0 17.5l13-7 13 7-13 8Z" fill="#9a9a9a" />
          <path d="M0 13.5l13-7 13 7-13 8Z" fill="#fff" />
          <path d="M0 12.8l13-7 13 7-13 8Z" fill="#b0b0b0" />
          <path d="M0 9.5l13-7 13 7-13 8Z" fill="#fff" />
          <path d="M0 8.5L13 .5l13 8-13 7.5Z" fill="#dcdcdc" />
        </svg>
      </LayersButton>
      <Attribution>Leaflet</Attribution>
    </MapBox>
  );
}

export default function App() {
  return (
    <Page>
      <GlobalStyle />
      <Sidebar>
        <Brand>
          POPULAR PLACES<BrandTag>BETA</BrandTag>
        </Brand>
        <NavPanel>
          {nav.map(([icon, text, tag, ls]) => (
            <NavItem key={text} $active={text === 'HISTORY'}>
              <NavIcon viewBox="0 0 64 64">{icons[icon]}</NavIcon>
              <NavText $ls={ls}>{text}</NavText>
              {tag && <NavTag>{tag}</NavTag>}
            </NavItem>
          ))}
        </NavPanel>
      </Sidebar>
      <Main>
        <History>
          {searches.map(([text, ls], i) => (
            <HistoryRow key={text} $active={i === 1}>
              <HistoryText $ls={ls}>{text}</HistoryText>
              <Remove viewBox="0 0 8 8"><path d="M1 1l6 6M7 1L1 7" /></Remove>
            </HistoryRow>
          ))}
        </History>
        <Info>
          <Head $center>NAME</Head>
          <Head>CITY</Head>
          <Head>TYPE 1</Head>
          <Head>TYPE 2</Head>
          <Head>DAY</Head>
          <Head $center>TIME</Head>
          <Cell $center>20211013-162429</Cell>
          <Cell>Athens Greece</Cell>
          <Cell>Cafe</Cell>
          <Cell />
          <Cell $hot>Wednesday - 16 Hour</Cell>
          <Cell $center>Oct 13, 2021, 4:24:29 PM</Cell>
        </Info>
        <Toolbar>
          <ToolButton $w={97}>Grid View</ToolButton>
          <ToolButton $w={108} $plain>Table View</ToolButton>
          <ToolButton $w={113}>Map Toggle</ToolButton>
        </Toolbar>
        <Card>
          <PlacesMap />
        </Card>
        <Card />
      </Main>
      <SettingsTab>
        <svg width="28" height="28" viewBox="0 0 24 24" fill="#fff">
          <path
            fillRule="evenodd"
            d="M9.5 0h5v3.2l2.3 1.3 2.7-1.6L22.7 7.2 20.8 9v6l1.9 1.8-3.2 4.3-2.7-1.6-2.3 1.3V24h-5v-3.2l-2.3-1.3-2.7 1.6-3.2-4.3L3.2 15V9L1.3 7.2l3.2-4.3 2.7 1.6 2.3-1.3ZM12 8.3a3.7 3.7 0 1 0 0 7.4 3.7 3.7 0 0 0 0-7.4Z"
          />
        </svg>
      </SettingsTab>
      <Thumb />
    </Page>
  );
}
